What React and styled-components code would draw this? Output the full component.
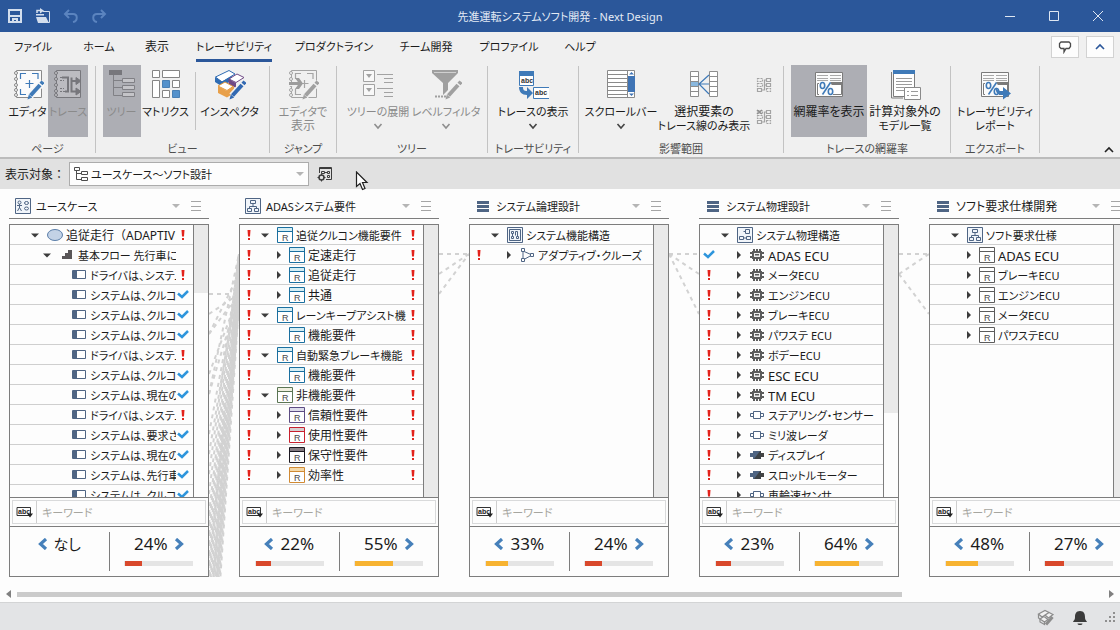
import React from 'react';
import styled, { createGlobalStyle, css } from 'styled-components';

const GlobalStyle = createGlobalStyle`
  * { box-sizing: border-box; }
  body {
    margin: 0;
    font-family: "Noto Sans", "Noto Sans CJK JP", sans-serif;
    font-size: 12px;
    line-height: 16px;
    font-feature-settings: "palt";
    color: #1b1b1b;
    background: #fdfdfd;
  }
  button, input, select { font: inherit; font-feature-settings: inherit; color: inherit; }
  button { border: 0; padding: 0; background: none; }
  ul { list-style: none; margin: 0; padding: 0; }
  svg { display: block; flex: none; }
`;

/* kana-heavy labels run small, kanji labels medium, Latin names large */
const textSize = (text) => {
  if (/^[A-Z ]+$/.test(text)) return 13;
  const kana = (text.match(/[\u3040-\u30ff、]/g) || []).length;
  return kana / text.length >= 0.4 ? 11 : 12;
};

/* ---------- page shell ---------- */
const Page = styled.div`
  display: flex;
  flex-direction: column;
  height: 100vh;
  overflow: hidden;
`;

const TitleBar = styled.header`
  display: grid;
  grid-template-columns: 1fr auto 1fr;
  align-items: center;
  flex: none;
  height: 32px;
  background: #2b579a;
  color: #e4ebf5;
`;
const QuickAccess = styled.div`
  display: flex;
  gap: 12px;
  padding-left: 7px;
`;
const WindowButtons = styled.div`
  display: flex;
  justify-content: flex-end;
`;
const TitleText = styled.h1`
  margin: 0;
  padding-top: 2px;
  font-size: 11px;
  font-weight: 400;
  white-space: nowrap;
`;
const BarButton = styled.button`
  display: flex;
  align-items: center;
  justify-content: center;
  width: ${(p) => p.$w || 16}px;
  height: ${(p) => p.$h || 16}px;
`;

/* ---------- ribbon ---------- */
const Ribbon = styled.section`
  flex: none;
  background: #f0f0f0;
  border-bottom: 2px solid #bcbcbc;
`;
const TabRow = styled.nav`
  display: flex;
  align-items: flex-start;
  height: 33px;
`;
const Tab = styled.button`
  display: flex;
  justify-content: center;
  width: ${(p) => p.$w}px;
  height: 30px;
  padding-top: 7px;
  font-size: ${(p) => p.$size}px;
  white-space: nowrap;
`;
const TabText = styled.span`
  height: 23px;
  border-bottom: 3px solid ${(p) => (p.$active ? '#2b579a' : 'transparent')};
`;
const TabTools = styled.div`
  display: flex;
  gap: 7px;
  margin-left: auto;
  padding: 4px 6px 0 0;
`;
const ToolButton = styled.button`
  display: flex;
  align-items: center;
  justify-content: center;
  width: 28px;
  height: 22px;
  background: #fdfdfd;
  border: 1px solid #d2d2d2;
`;
const Groups = styled.div`
  display: flex;
  height: 92px;
`;
const Group = styled.div`
  position: relative;
  display: flex;
  flex-direction: column;
  justify-content: space-between;
  width: ${(p) => p.$w}px;
  height: 92px;
  padding-right: 1px;
  &::after {
    content: "";
    position: absolute;
    right: 0;
    top: 1px;
    width: 1px;
    height: 87px;
    background: #c3c3c3;
  }
`;
const GroupButtons = styled.div`
  display: flex;
  justify-content: center;
`;
const GroupLabel = styled.div`
  height: 16px;
  text-align: center;
  font-size: 11px;
  line-height: 16px;
  color: #4c4c4c;
`;
const BigButton = styled.button`
  display: flex;
  flex-direction: column;
  align-items: center;
  width: ${(p) => p.$w}px;
  height: 72px;
  padding-top: 3px;
  line-height: 14px;
  white-space: nowrap;
  ${(p) => p.$on && css`background: #adaeb4;`}
  ${(p) => p.$dim && css`color: #8a8a8a;`}
  & > svg + svg { margin-top: 3px; }
`;
const ButtonText = styled.span`
  margin-top: ${(p) => (p.$first ? 5 : 0)}px;
  font-size: ${(p) => p.$size}px;
  & + svg { margin-top: 3px; }
`;
const InnerLine = styled.span`
  width: 1px;
  height: 58px;
  margin: 7px 1px 0 4px;
  background: #c3c3c3;
`;
const SmallButtons = styled.div`
  display: flex;
  flex-direction: column;
  align-items: center;
  gap: 16px;
  width: 28px;
  padding-top: 12px;
`;
const CollapseRow = styled.div`
  display: flex;
  align-items: flex-end;
  margin-left: auto;
  padding: 0 6px 3px 0;
`;

/* ---------- target bar ---------- */
const TargetBar = styled.div`
  display: flex;
  align-items: center;
  flex: none;
  height: 30px;
  padding-left: 5px;
  background: #e1e1e1;
`;
const TargetLabel = styled.label`
  width: 64px;
  padding-top: 2px;
  white-space: nowrap;
  font-feature-settings: normal;
`;
const SelectBox = styled.div`
  position: relative;
  width: 240px;
  margin-right: 8px;
  & > svg { position: absolute; top: 4px; left: 4px; pointer-events: none; }
  & > svg:last-child { top: 10px; left: auto; right: 5px; }
`;
const Select = styled.select`
  appearance: none;
  width: 100%;
  height: 24px;
  padding: 2px 20px 0 21px;
  border: 1px solid #acacac;
  border-radius: 0;
  background: #fdfdfd;
  font-size: 11px;
`;
const Pointer = styled.div`
  margin: 12px 0 0 22px;
  align-self: flex-start;
  height: 18px;
  position: relative;
  z-index: 1;
`;

/* ---------- columns ---------- */
const Board = styled.main`
  display: flex;
  flex: 1;
  min-height: 0;
  padding: 5px 0 0 9px;
  overflow: hidden;
`;
const Column = styled.section`
  display: flex;
  flex-direction: column;
  flex: none;
  width: 200px;
`;
const ColumnHead = styled.div`
  display: flex;
  align-items: center;
  height: 25px;
  padding: 0 7px 0 6px;
  margin-bottom: 5px;
  border-bottom: 1px solid #7d7d7d;
`;
const ColumnTitle = styled.h2`
  flex: 1;
  margin: 0 0 0 5px;
  padding-top: 2px;
  font-size: ${(p) => p.$size}px;
  font-weight: 400;
  white-space: nowrap;
`;
const HeadButton = styled.button`
  margin-left: 10px;
`;
const Panel = styled.div`
  display: flex;
  flex-direction: column;
  flex: 1;
  min-height: 0;
  border: 1px solid #7d7d7d;
  background: #fdfdfd;
`;
const TreeArea = styled.div`
  display: flex;
  flex: 1;
  min-height: 0;
  overflow: hidden;
  border-bottom: 1px solid #7d7d7d;
`;
const Tree = styled.ul`
  flex: 1;
  min-width: 0;
`;
const Track = styled.div`
  flex: none;
  width: 15px;
  border-left: 1px solid #7d7d7d;
`;
const Thumb = styled.div`
  height: ${(p) => p.$h}%;
  background: #eaeaea;
`;
const TreeRow = styled.li`
  display: flex;
  align-items: center;
  height: 20px;
  border-bottom: 1px solid #cfcfcf;
`;
const Mark = styled.span`
  display: flex;
  align-items: center;
  justify-content: center;
  flex: none;
  width: ${(p) => (p.$right ? 17 : 18)}px;
  padding-right: ${(p) => (p.$right ? 3 : 1)}px;
`;
const Twisty = styled.span`
  display: flex;
  justify-content: center;
  flex: none;
  width: 14px;
  margin-left: ${(p) => p.$level * 12}px;
  margin-right: 5px;
`;
const IconSlot = styled.span`
  display: flex;
  justify-content: center;
  flex: none;
  width: 16px;
  margin-right: 3px;
`;
const RowText = styled.span`
  flex: 1;
  min-width: 0;
  padding-top: 2px;
  overflow: hidden;
  white-space: nowrap;
  font-size: ${(p) => p.$size}px;
  ${(p) => p.$wideBrackets && css`font-feature-settings: normal;`}
`;
const SearchRow = styled.div`
  display: flex;
  flex: none;
  height: 24px;
  margin: 2px;
  border: 1px solid #d9dadb;
`;
const SearchMode = styled.button`
  display: flex;
  align-items: center;
  justify-content: center;
  width: 24px;
  border-right: 1px solid #cfcfcf;
`;
const SearchInput = styled.input`
  flex: 1;
  min-width: 0;
  padding: 2px 5px 0;
  border: 0;
  background: none;
  font-size: 11px;
  &::placeholder { color: #a6a6a0; opacity: 1; }
`;
const Stats = styled.div`
  display: grid;
  grid-template-columns: 1fr 1px 1fr;
  flex: none;
  height: 50px;
  border-top: 1px solid #7d7d7d;
`;
const StatLine = styled.span`
  margin: 5px 0;
  background: #7d7d7d;
`;
const Stat = styled.div`
  display: flex;
  flex-direction: column;
  align-items: center;
  padding-top: 5px;
`;
const StatButton = styled.button`
  display: flex;
  align-items: center;
  gap: 6px;
  height: 24px;
  font-size: ${(p) => (p.$word ? 15 : 17)}px;
`;
const Meter = styled.div`
  width: 69px;
  height: 5px;
  margin-top: 5px;
  padding-left: 1px;
  background: #e5e5e5;
`;
const MeterFill = styled.div`
  height: 5px;
  background: ${(p) => (p.$value > 30 ? '#f7b331' : '#d9492c')};
`;
const Links = styled.svg`
  width: 30px;
  height: 353px;
  margin-top: 30px;
`;

/* ---------- bottom ---------- */
const ScrollRow = styled.div`
  display: flex;
  align-items: center;
  flex: none;
  gap: 6px;
  height: 25px;
  padding: 9px 6px 0 6px;
`;
const ScrollTrack = styled.div`
  flex: 1;
`;
const ScrollThumb = styled.div`
  width: 81.5%;
  height: 5px;
  background: #cbcbcb;
`;
const StatusBar = styled.footer`
  display: flex;
  align-items: center;
  justify-content: flex-end;
  gap: 17px;
  flex: none;
  height: 28px;
  padding: 3px 3px 0 0;
  border-top: 1px solid #d3d4d5;
  background: #e3e4e6;
`;

/* ---------- drawings ---------- */
const Caret = ({ c = '#b5b5b5' }) => (
  <svg width="8" height="4"><path d="M0 0h8L4 4z" fill={c} /></svg>
);
const Chevron = ({ c = '#555', up }) => (
  <svg width="10" height="8" fill="none" stroke={c} strokeWidth="1.6">
    <path d={up ? 'M1 6l4-4 4 4' : 'M1.500 2l3.500 4 3.500-4'} />
  </svg>
);
const EditorBase = ({ line, accent }) => (
  <>
    <path d="M4.500 2.500h25v27h-25z" fill="none" stroke={line} />
    <g fill="#f6f6f6" stroke={line}>
      {[5, 11, 17, 22, 27].map((y) => <circle key={y} cx="4" cy={y} r="1.500" />)}
    </g>
    <path d="M8.500 11V5.500H14M20 5.500h6V11M8.500 21v5.500H14M17.500 12v8M13.500 15.500h8" fill="none" stroke={accent} strokeWidth="1.200" />
  </>
);
const Pencil = ({ c, bg = '#f0f0f0' }) => (
  <>
    <path d="M18 28L31 14" stroke={bg} strokeWidth="7" />
    <path d="M18.500 27.500L28 17" stroke={c} strokeWidth="4" />
    <path d="M29 16l2-2.300" stroke={c} strokeWidth="4" />
    <path d="M15.500 31.500l1.300-5 3.400 3z" fill={c} />
  </>
);
const PageFrame = ({ c = '#7b7b7b' }) => (
  <>
    <path d="M2.500 4.500h27v24h-27z" fill="#fbfbfb" stroke={c} />
    <path d="M4 7.500h11M17 7.500h11M4 10.500h11M17 10.500h11M4 12.500h11M17 12.500h11" stroke="#a9a9a9" />
    <path d="M4.500 15.500h24v11h-24z" fill="#fff" stroke={c} />
    <path d="M17 14h12v3H17z" fill={c} />
    <path d="M6 14h11l3 5v9H6z" fill="#fbfbfb" />
    <g fill="none" stroke="#3f7ab8" strokeWidth="1.600">
      <ellipse cx="9.500" cy="17.500" rx="2.200" ry="3" /><ellipse cx="17.500" cy="23.500" rx="2.200" ry="3" /><path d="M17.500 14.500L9.500 26.500" />
    </g>
  </>
);
const big = { width: 32, height: 32, viewBox: '0 0 32 32' };
const ribbonIcons = {
  editor: (
    <svg {...big}><rect x="4" y="2" width="26" height="28" fill="#fbfbfb" /><EditorBase line="#8a8a8a" accent="#3f7ab8" /><Pencil c="#3f7ab8" bg="#f8f8f8" /></svg>
  ),
  trace: (
    <svg {...big} fill="none" stroke="#77777c">
      <path d="M4.500 2.500h24v27h-24z" fill="#bcbcc1" />
      {[5, 11, 17, 23, 27].map((y) => <circle key={y} cx="4" cy={y} r="1.500" fill="#c4c4c8" />)}
      <path d="M8 9.500h6M8 12.500h4M8 20.500h4M8 23.500h6" strokeDasharray="2 1" />
      <path d="M10 9.500h6v14h-3M26 13h-6.500V9.500M19.500 13v10.500H26" strokeWidth="2" />
      <path d="M24 9.500l5 3.500-5 3.500zM24 20l5 3.500-5 3.500z" fill="#77777c" />
    </svg>
  ),
  tree: (
    <svg {...big} fill="none" stroke="#808085">
      <path d="M3 2h13v5H3z" fill="#77777c" stroke="none" />
      <path d="M7.500 7v20.500H16M7.500 12.500H16M7.500 19.500H16" />
      <path d="M16.500 10.500h12v4h-12zM16.500 17.500h12v4h-12zM16.500 24.500h12v4h-12z" fill="#c4c4c8" />
    </svg>
  ),
  matrix: (
    <svg {...big} fill="#fff" stroke="#858585">
      <path d="M2.500 2.500h7v7h-7zM12.500 2.500h17v7h-17zM2.500 12.500h7v17h-7zM22.500 12.500h7v7h-7zM12.500 22.500h7v7h-7z" />
      <path d="M12.500 12.500h7v7h-7zM22.500 22.500h7v7h-7z" fill="#5592cc" stroke="#4a80b5" />
    </svg>
  ),
  inspector: (
    <svg {...big}>
      <path d="M1.500 9L15 2.500 21 6l-13 8z" fill="#fff" stroke="#2f6cb3" />
      <path d="M1 9l7 4.500v5L1 14zM8 13.500L18 8v4L8 18.500z" fill="#2f6cb3" />
      <path d="M15 11l8-5 7 3.500-8 5z" fill="#fff" stroke="#704a86" />
      <path d="M14.500 11l7.500 4v5l-7.500-4z" fill="#704a86" />
      <path d="M4 18l7-4 8 4.500-6 4z" fill="#fff" stroke="#e2993d" />
      <path d="M4 18l9 5v6.500L4 25zM13 22.500l7-4.500v7l-7 4.500z" fill="#e8a04a" />
      <Pencil c="#3269b2" />
    </svg>
  ),
  jump: (
    <svg {...big}><EditorBase line="#a4a4a4" accent="#a4a4a4" /><path d="M2 15h12v2H2z" fill="none" stroke="#f0f0f0" strokeWidth="2" /><path d="M2 15.500h10" stroke="#9c9c9c" strokeWidth="3" /><path d="M8 10h4l4 5.500-4 5.500H8l4-5.500z" fill="#9c9c9c" /><Pencil c="#a0a0a0" /></svg>
  ),
  expand: (
    <svg {...big} fill="none" stroke="#a2a2a2">
      <path d="M1.500 2.500h11v11h-11zM1.500 16.500h11v11h-11z" fill="#f8f8f8" />
      <path d="M4 6h6l-3 4zM4 20h6l-3 4z" fill="#a2a2a2" stroke="none" />
      <path d="M15 6.500h16M22 10.500h9M22 14.500h9M15 20.500h16M22 24.500h9M22 28.500h9" />
    </svg>
  ),
  filter: (
    <svg {...big}><path d="M2 2h26v3L18 15v7l-5 5V15L2 5z" fill="#9f9f9f" /><path d="M4 4.500h22" stroke="#d0d0d0" /><path d="M5 28.500h12" stroke="#9f9f9f" strokeWidth="2" strokeDasharray="2 1" /><Pencil c="#a0a0a0" /></svg>
  ),
  showTrace: (
    <svg {...big}>
      <path d="M2.500 7.500h14v10h-14zM16.500 19.500h16v11h-16z" fill="#fff" stroke="#3f7ab8" />
      <path d="M2 3h15v5H2z" fill="#3f7ab8" />
      <text x="4" y="15" fontSize="7" fontWeight="700" fontFamily="Liberation Sans, sans-serif" fill="#333">abc</text>
      <text x="18" y="27" fontSize="7" fontWeight="700" fontFamily="Liberation Sans, sans-serif" fill="#333">abc</text>
      <path d="M2 19h4c0 3 1 4 4 4v-4l6 6-6 6v-4c-5 0-8-3-8-8z" fill="#3f7ab8" />
    </svg>
  ),
  scroll: (
    <svg {...big}>
      <path d="M2.500 2.500h27v27h-27z" fill="#fff" stroke="#8a8a8a" />
      <path d="M3 6.500h19M3 10.500h19M3 14.500h19M3 18.500h19M3 22.500h19M3 26.500h19" stroke="#8a8a8a" />
      <path d="M22 8h8v16h-8z" fill="#3f74b5" /><path d="M22.500 3v26" stroke="#8a8a8a" />
      <path d="M24 6.500h5L26.500 4zM24 25.500h5L26.500 28z" fill="#3f74b5" />
    </svg>
  ),
  select: (
    <svg {...big} fill="#fff" stroke="#8d8d8d">
      <path d="M2.500 3.500h8v25h-8zM21.500 3.500h8v25h-8zM21.500 8.500h8M21.500 13.500h8M21.500 18.500h8M21.500 23.500h8M2.500 8.500h8M2.500 23.500h8" />
      <path d="M2.500 13.500h8v5h-8z" fill="#8ab8de" />
      <path d="M21 7l-10 9 10 10M11 16h10" fill="none" stroke="#3f7ab8" strokeWidth="1.200" />
    </svg>
  ),
  coverage: <svg {...big}><PageFrame /></svg>,
  excluded: (
    <svg {...big}>
      <path d="M2.500 4v26H14" fill="none" stroke="#7d7d7d" />
      <path d="M4.500 4.500h21v24h-21z" fill="#fff" stroke="#7d7d7d" />
      <path d="M4 2h22v4H4z" fill="#3f7ab8" />
      <path d="M7 10.500h16M7 13.500h16M7 16.500h16M7 19.500h8M7 22.500h8" stroke="#9b9b9b" />
      <path d="M15.500 19.500h16v12h-16z" fill="#fff" stroke="#8a8a8a" />
      <path d="M18 23.500h2M18 27.500h2M22 23.500h7M22 27.500h7" stroke="#9b9b9b" />
    </svg>
  ),
  report: (
    <svg {...big}><PageFrame /><path d="M17 19c1 4 3 4 7 4v-4l8 6.500-8 6V27c-5 0-8-2-7-8z" fill="#3f7ab8" /></svg>
  ),
};

const quick = {
  save: (
    <svg width="16" height="16" fill="none" stroke="#d3deed" strokeWidth="2"><path d="M2 2h12v12H2zM2 8h12M6 14v-3h4v3" /></svg>
  ),
  open: (
    <svg width="16" height="16"><path d="M8 3.500h6.500v11H12" fill="none" stroke="#d3deed" /><path d="M1 9h10l3 6H3zM1 6h8v1.500H1z" fill="#d3deed" /><path d="M2 5V2.500h4" fill="none" stroke="#d3deed" strokeWidth="1.500" /><path d="M5 0l4 2.800L5 5.500z" fill="#d3deed" /></svg>
  ),
  undo: (
    <svg width="16" height="16" fill="none" stroke="#5b84bf" strokeWidth="2"><path d="M6 2L2 6l4 4M2 6h8c5 0 5 7 0 8" /></svg>
  ),
  redo: (
    <svg width="16" height="16" fill="none" stroke="#5b84bf" strokeWidth="2"><path d="M10 2l4 4-4 4M14 6H6c-5 0-5 7 0 8" /></svg>
  ),
};

const SmallTrace = ({ x }) => (
  <svg width="16" height="16" fill="none" stroke="#a3a3a3" strokeWidth="1.200">
    <path d="M1.500 1.500h5v3h-5zM1.500 6.500h5v3h-5z" strokeDasharray="2 1" />
    <path d="M1.500 11.500h4v3h-4zM10.500 1.500h4v3h-4zM10.500 6.500h4v3h-4z" />
    <path d="M6 13h2.500V3H10M8.500 8H10" />
    <path d="M10.500 11.500h4v3h-4z" strokeDasharray="2 1" />
    {x && <path d="M1 1l5 4M6 1L1 5" strokeWidth="1.500" stroke="#8f8f8f" />}
  </svg>
);

const Requirement = ({ c, top }) => (
  <svg width="16" height="16">
    <path d="M.5.5h15v15H.5z" fill="#fff" stroke={c} />
    <path d="M1 1h14v3H1z" fill={top} />
    <path d="M1 4.500h14" stroke={c} />
    <text x="5" y="14" fontSize="9" fontFamily="Liberation Sans, sans-serif" fill="#4a4a4a">R</text>
  </svg>
);
const box = (children) => (
  <svg width="16" height="16" fill="none" stroke="#4f6584">
    <path d="M.5.5h15v15H.5z" fill="#f1f5fa" />
    {children}
  </svg>
);
const nodeIcons = {
  useCase: box(<><circle cx="4.500" cy="4.500" r="1.500" /><path d="M4.500 6v4M2 7.500h5M4.500 9.500l-2 3.500M4.500 9.500l2 3.500" /><ellipse cx="11.500" cy="5" rx="2" ry="1.500" /><ellipse cx="11.500" cy="10.500" rx="2" ry="1.500" /></>),
  org: box(<path d="M5.500 2.500h5v3h-5zM2.500 10.500h4v3h-4zM9.500 10.500h4v3h-4zM8 6v2.500M4.500 10V8.500h7V10" />),
  bars: (
    <svg width="16" height="16"><path d="M2 3h12v3H2zM2 7h12v3H2zM2 11h12v3H2z" fill="#4f6584" /></svg>
  ),
  structure: box(<path d="M2.500 2.500h11v11h-11zM4.500 4.500h2v2h-2zM4.500 9.500h2v2h-2zM5.500 7v2M9.500 11.500h2v-2h-2zM10.500 9.500v-5h-2v4" />),
  physical: box(<path d="M8.500 2.500h4v4h-4zM2.500 9.500h4v3h-4zM9.500 9.500h4v3h-4zM6.500 11h3M8.500 4.500h-2" />),
  ellipse: (
    <svg width="16" height="12"><ellipse cx="8" cy="6" rx="7.500" ry="5.500" fill="#c3d2e6" stroke="#5b7ea8" /></svg>
  ),
  steps: <svg width="12" height="10"><path d="M1 9V6h3V3h3V0h4v9z" fill="#5a5658" /></svg>,
  part: (
    <svg width="14" height="9"><path d="M.5.5h13v8H.5z" fill="#fff" stroke="#4f6584" /><path d="M1 1h4v7H1z" fill="#4f6584" /></svg>
  ),
  fn: (
    <svg width="14" height="14" fill="#fff" stroke="#4f6584"><path d="M3 3v9M3 3l9 4-9 5" fill="none" /><path d="M1.500.5h3v3h-3zM1.500 10.500h3v3h-3zM10.500 5.500h3v3h-3z" /></svg>
  ),
  chip: (
    <svg width="14" height="12" fill="#5c5c5c">
      <path d="M2 2h10v8H2zM3 0h2v12H3zM6 0h2v12H6zM9 0h2v12H9zM0 3h14v2H0zM0 7h14v2H0z" />
      <path d="M4 4h6v4H4z" fill="#eee" /><path d="M5 5h4v1.500H5z" />
    </svg>
  ),
  sensor: (
    <svg width="14" height="8" stroke="#4f6584" fill="#fff"><path d="M.5 2.500h3v3h-3zM10.500 2.500h3v3h-3zM3.500.5h7v7h-7z" /></svg>
  ),
  actuator: (
    <svg width="14" height="8"><path d="M0 2h14v4H0z" fill="#444" /><path d="M3 0h8v8H3z" fill="#3d4247" /><path d="M0 2h3V0h7L4 8H3V6H0z" fill="#4f6584" /></svg>
  ),
  blue: <Requirement c="#1a6f9f" top="#d5edf3" />,
  green: <Requirement c="#5b7554" top="#f0efe0" />,
  purple: <Requirement c="#5d4c83" top="#dcdcea" />,
  red: <Requirement c="#c7202e" top="#d6cfcf" />,
  black: <Requirement c="#1b1820" top="#827a80" />,
  orange: <Requirement c="#d08a34" top="#f5d9a8" />,
  gray: <Requirement c="#5c5c5c" top="#fff" />,
};

const markIcons = {
  '!': <svg width="4" height="10"><path d="M.5 0h3L3 6.500H1zM1 8h2v2H1z" fill="#e3221b" /></svg>,
  v: <svg width="12" height="9" fill="none" stroke="#2e95dc" strokeWidth="2.500"><path d="M1 3.500L5 7l6-6" /></svg>,
};
const twisties = {
  open: <svg width="8" height="6"><path d="M0 1.500h8l-4 4z" fill="#3c3c3c" /></svg>,
  closed: <svg width="8" height="8"><path d="M4 0l4 4-4 4z" fill="#3c3c3c" /></svg>,
};

const Arrow = ({ right }) => (
  <svg width="10" height="12" fill="none" stroke="#4680ba" strokeWidth="3.200">
    <path d={right ? 'M2 1l5.500 5L2 11' : 'M8 1L2.500 6 8 11'} />
  </svg>
);

/* ---------- data ---------- */
const tabs = [
  ['ファイル', 66], ['ホーム', 66], ['表示', 50], ['トレーサビリティ', 104], ['プロダクトライン', 96],
  ['チーム開発', 88], ['プロファイル', 78], ['ヘルプ', 64],
];

/* row: left mark, level, twisty, icon, text, right mark */
const step = (text, mark) => ['', 2, '', 'part', text, mark];
const req = (level, twisty, icon, text) => ['!', level, twisty, icon, text, '!'];
const ecu = (text, icon = 'chip', mark = '!') => [mark, 1, 'closed', icon, text];
const soft = (text) => ['', 1, 'closed', 'gray', text];

const columns = [
  {
    title: 'ユースケース', icon: 'useCase', thumb: 25, prev: 'なし', next: 24,
    rows: [
      ['', 0, 'open', 'ellipse', '追従走行（ADAPTIV', '!'],
      ['', 1, 'open', 'steps', '基本フロー 先行車に', ''],
      step('ドライバは、システム', '!'),
      step('システムは、クルコン', 'v'), step('システムは、クルコン', 'v'), step('システムは、クルコン', 'v'),
      step('ドライバは、システム', '!'),
      step('システムは、クルコン', 'v'), step('システムは、現在の', 'v'),
      step('ドライバは、システム', '!'),
      step('システムは、要求さ', 'v'), step('システムは、現在の', 'v'), step('システムは、先行車', 'v'), step('システムは、クルコン', 'v'),
    ],
  },
  {
    title: 'ADASシステム要件', icon: 'org', thumb: 100, prev: 22, next: 55,
    rows: [
      req(0, 'open', 'blue', '追従クルコン機能要件'),
      req(1, 'closed', 'blue', '定速走行'), req(1, 'closed', 'blue', '追従走行'), req(1, 'closed', 'blue', '共通'),
      req(0, 'open', 'blue', 'レーンキープアシスト機能'),
      req(1, '', 'blue', '機能要件'),
      req(0, 'open', 'blue', '自動緊急ブレーキ機能'),
      req(1, '', 'blue', '機能要件'),
      req(0, 'open', 'green', '非機能要件'),
      req(1, 'closed', 'purple', '信頼性要件'), req(1, 'closed', 'red', '使用性要件'),
      req(1, 'closed', 'black', '保守性要件'), req(1, 'closed', 'orange', '効率性'),
    ],
  },
  {
    title: 'システム論理設計', icon: 'bars', thumb: 100, prev: 33, next: 24,
    rows: [
      ['', 0, 'open', 'structure', 'システム機能構造'],
      ecu('アダプティブ・クルーズ', 'fn'),
    ],
  },
  {
    title: 'システム物理設計', icon: 'bars', thumb: 69, prev: 23, next: 64,
    rows: [
      ['', 0, 'open', 'physical', 'システム物理構造'],
      ecu('ADAS ECU', 'chip', 'v'), ecu('メータECU'), ecu('エンジンECU'), ecu('ブレーキECU'), ecu('パワステ ECU'),
      ecu('ボデーECU'), ecu('ESC ECU'), ecu('TM ECU'),
      ecu('ステアリング・センサー', 'sensor'), ecu('ミリ波レーダ', 'sensor'),
      ecu('ディスプレイ', 'actuator'), ecu('スロットルモーター', 'actuator'), ecu('車輪速センサ', 'sensor'),
    ],
  },
  {
    title: 'ソフト要求仕様開発', icon: 'bars', thumb: 100, prev: 48, next: 27,
    rows: [
      ['', 0, 'open', 'org', 'ソフト要求仕様'],
      soft('ADAS ECU'), soft('ブレーキECU'), soft('エンジンECU'), soft('メータECU'), soft('パワステECU'),
    ],
  },
];

/* pairs of row numbers joined across each gap */
const bundle = Array.from({ length: 24 }, (_, i) => [14 + i * 0.5, 1 + (i % 6) * 0.5]);
const links = [
  [[3, 3], [4, 3], [5, 3], [5, 2], [7, 3], [8, 3], [8, 1], [10, 2], [11, 2], [12, 1], [13, 1], ...bundle],
  [[1, 1], [2, 1], [3, 1]],
  [[1, 1], [1, 2], [1, 4]],
  [[1, 1], [2, 1], [2, 4]],
];

const ribbon = [
  { label: 'ページ', w: 96, items: [{ i: 'editor', t: 'エディタ', w: 41 }, { i: 'trace', t: 'トレース', w: 40, on: true, dim: true }] },
  { label: 'ビュー', w: 174, items: [{ i: 'tree', t: 'ツリー', w: 38, on: true, dim: true }, { i: 'matrix', t: 'マトリクス', w: 50 }, 'line', { i: 'inspector', t: 'インスペクタ', w: 66 }] },
  { label: 'ジャンプ', w: 67, items: [{ i: 'jump', t: 'エディタで\n表示', w: 60, dim: true }] },
  { label: 'ツリー', w: 151, items: [{ i: 'expand', t: 'ツリーの展開', w: 68, dim: true, menu: true }, { i: 'filter', t: 'レベルフィルタ', w: 68, dim: true, menu: true }] },
  { label: 'トレーサビリティ', w: 91, items: [{ i: 'showTrace', t: 'トレースの表示', w: 76, menu: true }] },
  { label: '影響範囲', w: 205, items: [{ i: 'scroll', t: 'スクロールバー', w: 74, menu: true }, { i: 'select', t: '選択要素の\nトレース線のみ表示', w: 92 }, 'small'] },
  { label: 'トレースの網羅率', w: 167, items: [{ i: 'coverage', t: '網羅率を表示', w: 76, on: true }, { i: 'excluded', t: '計算対象外の\nモデル一覧', w: 76 }] },
  { label: 'エクスポート', w: 89, items: [{ i: 'report', t: 'トレーサビリティ\nレポート', w: 76 }] },
];

const RibbonItem = ({ item }) => {
  if (item === 'line') return <InnerLine />;
  if (item === 'small') {
    return (
      <SmallButtons>
        <BarButton aria-label="影響範囲を表示"><SmallTrace /></BarButton>
        <BarButton aria-label="影響範囲を解除"><SmallTrace x /></BarButton>
      </SmallButtons>
    );
  }
  return (
    <BigButton $w={item.w} $on={item.on} $dim={item.dim}>
      {ribbonIcons[item.i]}
      {item.t.split('\n').map((line, i) => (
        <ButtonText key={line} $first={i === 0} $size={textSize(line)}>{line}</ButtonText>
      ))}
      {item.menu && <Chevron c={item.dim ? '#8e8e8e' : '#444'} />}
    </BigButton>
  );
};

const StatCell = ({ value, right }) => {
  const word = typeof value === 'string';
  return (
    <Stat>
      <StatButton $word={word}>
        {!right && <Arrow />}
        {word ? value : `${value}%`}
        {right && <Arrow right />}
      </StatButton>
      {!word && <Meter><MeterFill $value={value} style={{ width: `${value}%` }} /></Meter>}
    </Stat>
  );
};

const TreeColumn = ({ col }) => (
  <Column>
    <ColumnHead>
      {nodeIcons[col.icon]}
      <ColumnTitle $size={textSize(col.title)}>{col.title}</ColumnTitle>
      <HeadButton aria-label="表示の選択"><Caret /></HeadButton>
      <HeadButton aria-label="メニュー">
        <svg width="12" height="10" stroke="#a5a5a5"><path d="M1 .5h10M1 5.500h10M1 9.500h10" /></svg>
      </HeadButton>
    </ColumnHead>
    <Panel>
      <TreeArea>
        <Tree>
          {col.rows.map(([left, level, twisty, icon, text, right], i) => (
            <TreeRow key={i}>
              <Mark>{markIcons[left]}</Mark>
              <Twisty $level={level}>{twisties[twisty]}</Twisty>
              <IconSlot>{nodeIcons[icon]}</IconSlot>
              <RowText $size={textSize(text)} $wideBrackets={text.includes('（')}>{text}</RowText>
              {right !== undefined && <Mark $right>{markIcons[right]}</Mark>}
            </TreeRow>
          ))}
        </Tree>
        <Track><Thumb $h={col.thumb} /></Track>
      </TreeArea>
      <SearchRow>
        <SearchMode aria-label="検索方法">
          <svg width="17" height="12">
            <path d="M1 1.500h13.500v8H1z" fill="none" stroke="#333" />
            <text x="2" y="8" fontSize="7" fontWeight="700" fontFamily="Liberation Sans, sans-serif" fill="#222">abc</text>
            <path d="M11 7.500h6l-3 4z" fill="#222" />
          </svg>
        </SearchMode>
        <SearchInput placeholder="キーワード" aria-label={`${col.title}の検索`} />
      </SearchRow>
      <Stats>
        <StatCell value={col.prev} />
        <StatLine />
        <StatCell value={col.next} right />
      </Stats>
    </Panel>
  </Column>
);

export default function App() {
  return (
    <Page>
      <GlobalStyle />
      <TitleBar>
        <QuickAccess>
          <BarButton aria-label="保存">{quick.save}</BarButton>
          <BarButton aria-label="開く">{quick.open}</BarButton>
          <BarButton aria-label="元に戻す">{quick.undo}</BarButton>
          <BarButton aria-label="やり直し">{quick.redo}</BarButton>
        </QuickAccess>
        <TitleText>先進運転システムソフト開発 - Next Design</TitleText>
        <WindowButtons>
          <BarButton $w={44} $h={32} aria-label="最小化"><svg width="10" height="10" stroke="#dfe7f2"><path d="M0 5.500h10" /></svg></BarButton>
          <BarButton $w={44} $h={32} aria-label="最大化"><svg width="10" height="10" fill="none" stroke="#dfe7f2"><path d="M.5.5h9v9h-9z" /></svg></BarButton>
          <BarButton $w={44} $h={32} aria-label="閉じる"><svg width="10" height="10" stroke="#dfe7f2"><path d="M0 0l10 10M10 0L0 10" /></svg></BarButton>
        </WindowButtons>
      </TitleBar>

      <Ribbon>
        <TabRow>
          {tabs.map(([name, w]) => (
            <Tab key={name} $w={w} $size={textSize(name)}>
              <TabText $active={name === 'トレーサビリティ'}>{name}</TabText>
            </Tab>
          ))}
          <TabTools>
            <ToolButton aria-label="コメント">
              <svg width="14" height="14" fill="#fff" stroke="#4a4a4a" strokeWidth="1.300"><path d="M3 2h8l1.500 1.500v3L11 8.500H8L6 12V8.500H3L1.500 7V3.500z" /></svg>
            </ToolButton>
            <ToolButton aria-label="リボンを隠す"><Chevron up c="#2b579a" /></ToolButton>
          </TabTools>
        </TabRow>
        <Groups>
          {ribbon.map((g) => (
            <Group key={g.label} $w={g.w}>
              <GroupButtons>{g.items.map((item, i) => <RibbonItem key={i} item={item} />)}</GroupButtons>
              <GroupLabel>{g.label}</GroupLabel>
            </Group>
          ))}
          <CollapseRow><button aria-label="折りたたむ"><Chevron up c="#222" /></button></CollapseRow>
        </Groups>
      </Ribbon>

      <TargetBar>
        <TargetLabel htmlFor="target">表示対象：</TargetLabel>
        <SelectBox>
          <Select id="target"><option>ユースケース～ソフト設計</option></Select>
          <svg width="16" height="16" fill="none" stroke="#4c4c4c"><path d="M1.500 1.500h5v3h-5zM8.500 5.500h6v3h-6zM8.500 11.500h6v3h-6zM3.500 5v8.500H8M3.500 7.500H8" /></svg>
          <Caret />
        </SelectBox>
        <BarButton aria-label="表示設定">
          <svg width="16" height="16" fill="none" stroke="#3c3c3c"><path d="M2.500 7V1.500h12v12H9M3 2.500h11" /><path d="M4.500 5.500h3v2h-3zM10.500 5.500h2v2h-2zM10.500 9.500h2v2h-2zM8 6.500h2" /><circle cx="4.500" cy="11.500" r="2.500" strokeWidth="1.500" /><path d="M4.500 7.500v2M4.500 13.500v2M.5 11.500h2M6.500 11.500h2" /></svg>
        </BarButton>
        <Pointer>
          <svg width="14" height="20"><path d="M1.500 1v14.500l3.500-3 2.500 6 2.500-1-2.500-6h4.500z" fill="#fff" stroke="#222" strokeWidth="1.200" /></svg>
        </Pointer>
      </TargetBar>

      <Board>
        {columns.map((col, i) => (
          <React.Fragment key={col.title}>
            {i > 0 && (
              <Links stroke="#d2d2d2" strokeWidth="2" strokeDasharray="4 4">
                {links[i - 1].map(([a, b], k) => <path key={k} d={`M0 ${10 + a * 20}L30 ${10 + b * 20}`} />)}
              </Links>
            )}
            <TreeColumn col={col} />
          </React.Fragment>
        ))}
      </Board>

      <ScrollRow>
        <svg width="5" height="8"><path d="M5 0v8L0 4z" fill="#808080" /></svg>
        <ScrollTrack><ScrollThumb /></ScrollTrack>
        <svg width="5" height="8"><path d="M0 0v8l5-4z" fill="#808080" /></svg>
      </ScrollRow>
      <StatusBar>
        <svg width="18" height="18" fill="none" stroke="#8c8c8c" strokeWidth="1.200"><path d="M1.500 5L8 1.500l4 2L5 8zM8 6l4-2.500 4 2L11.500 9zM3 10l4-2.500 4 3-3.500 2.500z" fill="#f2f2f2" /><path d="M1.500 5v4L3 10M3 10v3l4.500 2.500v-3" /><path d="M9 15.500L15.500 8" strokeWidth="3" /></svg>
        <svg width="16" height="16"><path d="M8 1c4 0 5 3 5 6 0 3 1 3 2 5H1c1-2 2-2 2-5 0-3 1-6 5-6zM5.500 13.500h5c0 2-5 2-5 0z" fill="#3b3b3b" /></svg>
        <svg width="12" height="12" fill="#8f8f8f"><path d="M8 0h2v2H8zM4 4h2v2H4zM8 4h2v2H8zM0 8h2v2H0zM4 8h2v2H4zM8 8h2v2H8z" /></svg>
      </StatusBar>
    </Page>
  );
}
